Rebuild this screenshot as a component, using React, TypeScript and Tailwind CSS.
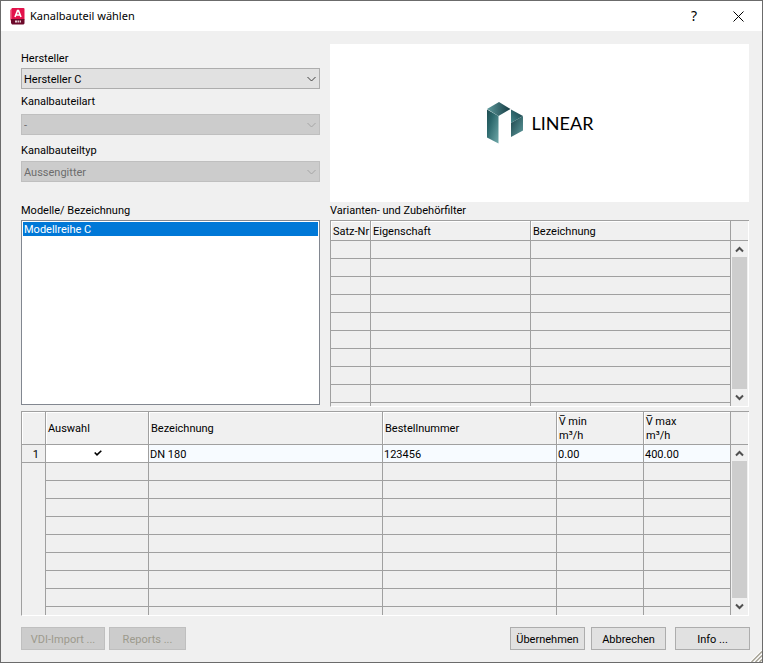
import type { ReactNode } from "react";

const filterRows = Array.from({ length: 10 }, (_, i) => i);
const emptyRows = Array.from({ length: 30 }, (_, i) => i);

function Chevron({ className }: { className: string }) {
  return (
    <svg className={className} width="11" height="7" viewBox="0 0 11 7" fill="none" stroke="currentColor" aria-hidden="true">
      <path d="M1.5 1L5.5 5L9.5 1" />
    </svg>
  );
}

function Combo({ id, label, value, disabled, gap }: { id: string; label: string; value: string; disabled?: boolean; gap: string }) {
  return (
    <div className={`flex flex-col ${gap}`}>
      <label htmlFor={id} className="h-[14px] leading-4">
        {label}
      </label>
      <div className="relative">
        <select
          id={id}
          disabled={disabled}
          className="block h-[21px] w-full appearance-none border border-[#adadad] bg-[#e1e1e1] px-[2px] pt-[2px] text-black disabled:border-[#bfbfbf] disabled:bg-[#cccccc] disabled:text-[#6d6d6d] disabled:opacity-100"
        >
          <option>{value}</option>
        </select>
        <Chevron className={`pointer-events-none absolute top-[8px] right-[3px] ${disabled ? "text-[#a6a6a6]" : "text-[#404040]"}`} />
      </div>
    </div>
  );
}

function ArrowButton({ up, label }: { up?: boolean; label: string }) {
  return (
    <button type="button" aria-label={label} className="flex h-4 w-full shrink-0 items-center justify-center">
      <svg width="9" height="7" viewBox="0 0 9 7" fill="none" stroke="#505050" strokeWidth="2" aria-hidden="true">
        {up ? <path d="M1 5.5L4.5 2L8 5.5" /> : <path d="M1 1.5L4.5 5L8 1.5" />}
      </svg>
    </button>
  );
}

function ScrollBar({ headHeight }: { headHeight: string }) {
  return (
    <div className="flex w-[18px] shrink-0 flex-col border-r border-white pb-px">
      <div className={`shrink-0 border-b border-[#a0a0a0] ${headHeight}`} />
      <ArrowButton up label="Nach oben" />
      <div className="mr-px ml-px flex-1 bg-[#cdcdcd]" />
      <ArrowButton label="Nach unten" />
    </div>
  );
}

function Head({ children }: { children?: ReactNode }) {
  return (
    <th className="overflow-hidden border-r border-b border-[#a0a0a0] px-[2px] pt-[2px] pb-0 text-left font-normal whitespace-nowrap shadow-[inset_1px_1px_0_#ffffff]">
      {children}
    </th>
  );
}

function Cell({ children, className = "" }: { children?: ReactNode; className?: string }) {
  return <td className={`h-[18px] border-r border-b border-[#a0a0a0] px-px pt-[2px] pb-0 ${className}`}>{children}</td>;
}

function PushButton({ children, disabled, width }: { children: ReactNode; disabled?: boolean; width: string }) {
  return (
    <button
      type="button"
      disabled={disabled}
      className={`h-[23px] border border-[#adadad] bg-[#e1e1e1] pt-[2px] text-black disabled:border-[#bfbfbf] disabled:bg-[#cccccc] disabled:text-[#9c9a8c] ${width}`}
    >
      {children}
    </button>
  );
}

function AppIcon() {
  return (
    <svg width="15" height="17" viewBox="0 0 15 17" aria-hidden="true">
      <path d="M0 2L3 0V14L0 12Z" fill="#f0708e" />
      <rect x="1.5" width="13" height="12" rx="1" fill="#e3124b" />
      <path d="M1 11H14.500V15.500L13.500 16.500H2L1 15Z" fill="#6d0a2b" />
      <path d="M5 9L7.500 2.600H8.500L11 9M6 7H10" fill="none" stroke="#fff" strokeWidth="1.600" />
      <path d="M5 13.500H7M7.500 13.500H9M9.600 13.500H11" stroke="#e6cfd6" strokeWidth="1.800" />
    </svg>
  );
}

function LinearMark() {
  return (
    <svg width="38" height="42" viewBox="0 0 38 42" aria-hidden="true">
      <defs>
        <linearGradient id="side" x1="0" y1="0" x2="1" y2="1">
          <stop offset="0" stopColor="#1f4c50" />
          <stop offset="0.350" stopColor="#2c686c" />
          <stop offset="1" stopColor="#70a9aa" />
        </linearGradient>
        <linearGradient id="roof" x1="0" y1="0" x2="1" y2="0">
          <stop offset="0" stopColor="#5e9a9c" />
          <stop offset="1" stopColor="#153b43" />
        </linearGradient>
        <linearGradient id="wing" x1="1" y1="0" x2="0" y2="1">
          <stop offset="0" stopColor="#163c44" />
          <stop offset="1" stopColor="#43868a" />
        </linearGradient>
        <linearGradient id="foot" x1="0" y1="0" x2="1" y2="1">
          <stop offset="0" stopColor="#1a4249" />
          <stop offset="1" stopColor="#5f9b9d" />
        </linearGradient>
      </defs>
      <path d="M1 7.500L12.500 14V41.500L1 35.500Z" fill="url(#side)" />
      <path d="M1 7L13 0L24.500 7L12.500 14Z" fill="url(#roof)" />
      <path d="M25 7.500L37 14L25 21Z" fill="url(#wing)" />
      <path d="M25 21L37 14V28.500L25 35Z" fill="url(#foot)" />
    </svg>
  );
}

export default function App() {
  return (
    <main className="relative flex h-screen min-h-[560px] flex-col border border-[#6b6b6b] bg-[#f0f0f0] font-[Roboto,'Noto_Sans',sans-serif] text-[11px] leading-[14px] text-black">
      <header className="flex h-[30px] shrink-0 items-center bg-white pr-[18px] pl-[9px]">
        <AppIcon />
        <h1 className="ml-[5px] flex-1 font-['Noto_Sans',sans-serif]">Kanalbauteil wählen</h1>
        <button type="button" aria-label="Hilfe" className="mr-[33px] w-3 font-['Noto_Sans',sans-serif] text-sm">
          ?
        </button>
        <button type="button" aria-label="Schließen">
          <svg width="11" height="11" viewBox="0 0 11 11" stroke="#000" aria-hidden="true">
            <path d="M0.500 0.500L10.500 10.500M10.500 0.500L0.500 10.500" />
          </svg>
        </button>
      </header>

      <div className="flex min-h-0 flex-1 flex-col pr-[13px] pb-3 pl-5">
        <div className="flex shrink-0 gap-[10px]">
          <section className="w-[299px] shrink-0 pt-5">
            <Combo id="hersteller" label="Hersteller" value="Hersteller C" gap="gap-[3px]" />
            <div className="h-[5px]" />
            <Combo id="bauteilart" label="Kanalbauteilart" value="-" disabled gap="gap-[6px]" />
            <div className="h-2" />
            <Combo id="bauteiltyp" label="Kanalbauteiltyp" value="Aussengitter" disabled gap="gap-1" />
          </section>
          <div className="mt-[13px] flex h-[158px] flex-1 items-center justify-center gap-2 bg-white">
            <LinearMark />
            <span className="font-[Lato,sans-serif] text-lg">LINEAR</span>
          </div>
        </div>

        <div className="mt-px flex shrink-0 gap-[10px]">
          <section className="flex w-[299px] shrink-0 flex-col gap-[3px]">
            <h2 id="modelle" className="h-[14px] leading-4">
              Modelle/ Bezeichnung
            </h2>
            <ul role="listbox" aria-labelledby="modelle" className="h-[185px] border border-[#828790] bg-white p-px">
              <li role="option" aria-selected="true" className="h-[14px] bg-[#0078d7] px-px leading-4 text-white">
                Modellreihe C
              </li>
            </ul>
          </section>

          <section className="flex min-w-0 flex-1 flex-col gap-[3px]">
            <h2 className="h-[14px] leading-4">Varianten- und Zubehörfilter</h2>
            <div className="flex h-[187px] border-t border-b border-l border-t-[#a0a0a0] border-b-white border-l-[#a0a0a0]">
              <div className="min-w-0 flex-1 overflow-hidden">
                <table className="w-full table-fixed border-separate border-spacing-0">
                  <colgroup>
                    <col className="w-[40px]" />
                    <col className="w-[160px]" />
                    <col />
                  </colgroup>
                  <thead>
                    <tr className="h-5">
                      <Head>Satz-Nr</Head>
                      <Head>Eigenschaft</Head>
                      <Head>Bezeichnung</Head>
                    </tr>
                  </thead>
                  <tbody>
                    {filterRows.map((i) => (
                      <tr key={i}>
                        <Cell />
                        <Cell />
                        <Cell />
                      </tr>
                    ))}
                  </tbody>
                </table>
              </div>
              <ScrollBar headHeight="h-5" />
            </div>
          </section>
        </div>

        <div className="mt-1 flex min-h-0 flex-1 border-t border-b border-l border-t-[#a0a0a0] border-b-white border-l-[#a0a0a0]">
          <div className="min-w-0 flex-1 overflow-hidden">
            <table className="w-full table-fixed border-separate border-spacing-0">
              <colgroup>
                <col className="w-[24px]" />
                <col className="w-[103px]" />
                <col />
                <col className="w-[174px]" />
                <col className="w-[87px]" />
                <col className="w-[87px]" />
              </colgroup>
              <thead>
                <tr className="h-[33px]">
                  <Head />
                  <Head>Auswahl</Head>
                  <Head>Bezeichnung</Head>
                  <Head>Bestellnummer</Head>
                  <Head>
                    V̅ min
                    <br />
                    m³/h
                  </Head>
                  <Head>
                    V̅ max
                    <br />
                    m³/h
                  </Head>
                </tr>
              </thead>
              <tbody>
                <tr>
                  <th scope="row" className="h-[18px] border-r border-b border-[#a0a0a0] pt-[2px] pr-[6px] pb-0 text-right font-normal">
                    1
                  </th>
                  <Cell className="bg-white">
                    <label className="flex items-center justify-center">
                      <input type="checkbox" defaultChecked aria-label="Auswahl Zeile 1" className="peer absolute size-3 appearance-none" />
                      <svg className="pointer-events-none invisible mb-[2px] ml-[2px] peer-checked:visible" width="8" height="7" viewBox="0 0 8 7" fill="none" stroke="#000" strokeWidth="1.600" aria-hidden="true">
                        <path d="M0.700 2.500L3 4.900L7.300 0.700" />
                      </svg>
                    </label>
                  </Cell>
                  <Cell className="bg-[#f7fbff]">DN 180</Cell>
                  <Cell className="bg-[#f7fbff]">123456</Cell>
                  <Cell className="bg-[#f7fbff]">0.00</Cell>
                  <Cell className="bg-[#f7fbff]">400.00</Cell>
                </tr>
                {emptyRows.map((i) => (
                  <tr key={i}>
                    <td className="border-r border-[#a0a0a0]" />
                    <Cell />
                    <Cell />
                    <Cell />
                    <Cell />
                    <Cell />
                  </tr>
                ))}
              </tbody>
            </table>
          </div>
          <ScrollBar headHeight="h-[33px]" />
        </div>

        <footer className="mt-[11px] -mr-px flex shrink-0">
          <PushButton disabled width="w-[84px]">VDI-Import ...</PushButton>
          <div className="w-1" />
          <PushButton disabled width="w-[77px]">Reports ...</PushButton>
          <div className="flex-1" />
          <PushButton width="w-[75px]">Übernehmen</PushButton>
          <div className="w-[6px]" />
          <PushButton width="w-[75px]">Abbrechen</PushButton>
          <div className="w-[9px]" />
          <PushButton width="w-[75px]">Info ...</PushButton>
        </footer>
      </div>

      <svg className="absolute right-0 bottom-0" width="12" height="12" viewBox="0 0 12 12" aria-hidden="true">
        <path d="M0 12L12 0M4 12L12 4M8 12L12 8" stroke="#ffffff" strokeWidth="1.200" />
        <path d="M1.500 12L12 1.500M5.500 12L12 5.500M9.500 12L12 9.500" stroke="#a5a294" strokeWidth="1.400" />
      </svg>
    </main>
  );
}
